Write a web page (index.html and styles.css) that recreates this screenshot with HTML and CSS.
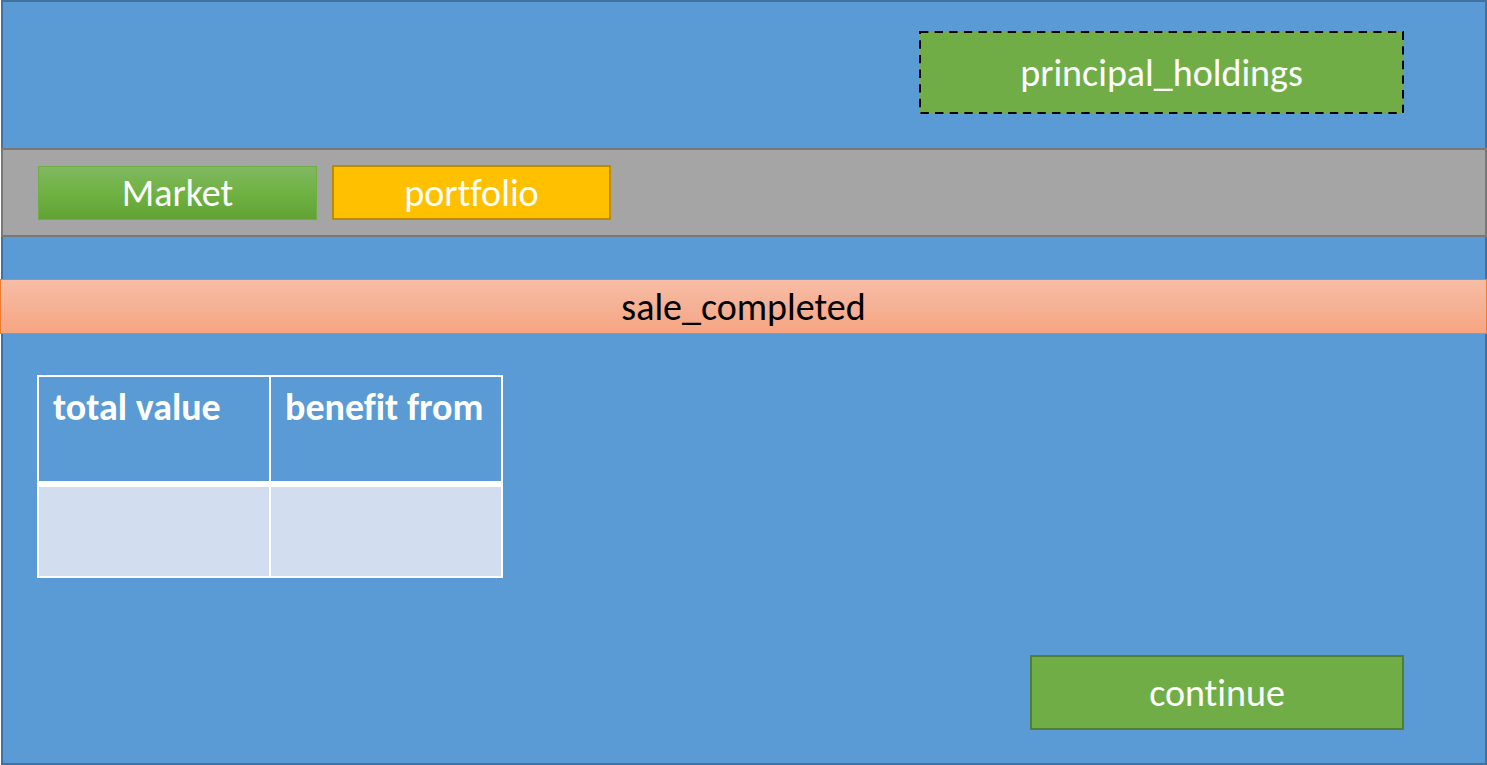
FILE: index.html
```html
<!DOCTYPE html>
<html lang="en">
<head>
<meta charset="utf-8">
<meta name="viewport" content="width=device-width, initial-scale=1">
<title>Sale completed</title>
<link rel="stylesheet" href="styles.css">
</head>
<body>
<div class="frame">
  <header class="header">
    <div class="holdings">
      <svg class="holdings-outline" aria-hidden="true"><rect width="100%" height="100%" pathLength="540"/></svg>
      <span>principal_holdings</span>
    </div>
  </header>
  <nav class="nav">
    <a class="tab tab-market" href="#market">Market</a>
    <a class="tab tab-portfolio" href="#portfolio">portfolio</a>
  </nav>
  <p class="notice" role="status">sale_completed</p>
  <main class="content">
    <table class="summary">
      <thead>
        <tr><th scope="col">total value</th><th scope="col">benefit from</th></tr>
      </thead>
      <tbody>
        <tr><td></td><td></td></tr>
      </tbody>
    </table>
    <button class="continue" type="button">continue</button>
  </main>
</div>
</body>
</html>
```

FILE: styles.css
```css
* {
  box-sizing: border-box;
}

body {
  margin: 0;
  background: #fff;
  color: #fff;
  font: 38px/40px Carlito, Calibri, Lato, sans-serif;
  font-variant-ligatures: none;
}

.frame {
  display: flex;
  flex-direction: column;
  min-height: 100vh;
  margin-left: 1px;
  border: 2px solid #41719c;
  background: #5b9bd5;
}

.header {
  display: flex;
  justify-content: flex-end;
  padding: 29px 81px 34px 35px;
}

.holdings {
  position: relative;
  display: flex;
  align-items: center;
  justify-content: center;
  width: 485px;
  min-height: 83px;
  background: #70ad47;
}

.holdings-outline {
  position: absolute;
  top: 1px;
  left: 1px;
  width: calc(100% - 2px);
  height: calc(100% - 2px);
  overflow: visible;
  fill: none;
  stroke: #000;
  stroke-width: 2px;
  stroke-dasharray: 4 3;
}

.nav {
  display: flex;
  align-items: flex-end;
  gap: 15px;
  margin: 0 -2px;
  padding: 15px 35px;
  border: 2px solid #787878;
  background: #a5a5a5;
}

.tab {
  display: flex;
  align-items: center;
  justify-content: center;
  width: 279px;
  height: 55px;
  color: #fff;
  text-decoration: none;
}

.tab-market {
  height: 54px;
  border: 1px solid #70ad47;
  background: linear-gradient(#81b861, #6fb242 50%, #61a235);
}

.tab-portfolio {
  border: 2px solid #bc8c00;
  background: #ffc000;
}

.notice {
  margin: 42px -2px 0 -3px;
  padding: 7px 0 6px;
  border: 1px solid #ed7d31;
  background: linear-gradient(#f7bda4, #f5b195 50%, #f8a581);
  color: #000;
  text-align: center;
}

.content {
  display: flex;
  flex: 1;
  flex-direction: column;
  align-items: flex-start;
  justify-content: space-between;
  gap: 32px;
  padding: 41px 81px 33px 34px;
}

.summary {
  width: 466px;
  border-collapse: collapse;
  table-layout: fixed;
}

.summary th,
.summary td {
  border: 2px solid #fff;
  padding: 10px 14px;
  text-align: left;
  vertical-align: top;
}

.summary th {
  height: 108px;
  border-bottom-width: 6px;
  font-weight: bold;
  white-space: nowrap;
}

.summary td {
  height: 93px;
  background: #d2deef;
}

.continue {
  align-self: flex-end;
  width: 374px;
  height: 75px;
  padding: 0;
  border: 2px solid #507e32;
  background: #70ad47;
  color: inherit;
  font: inherit;
  font-variant-ligatures: none;
}
```
